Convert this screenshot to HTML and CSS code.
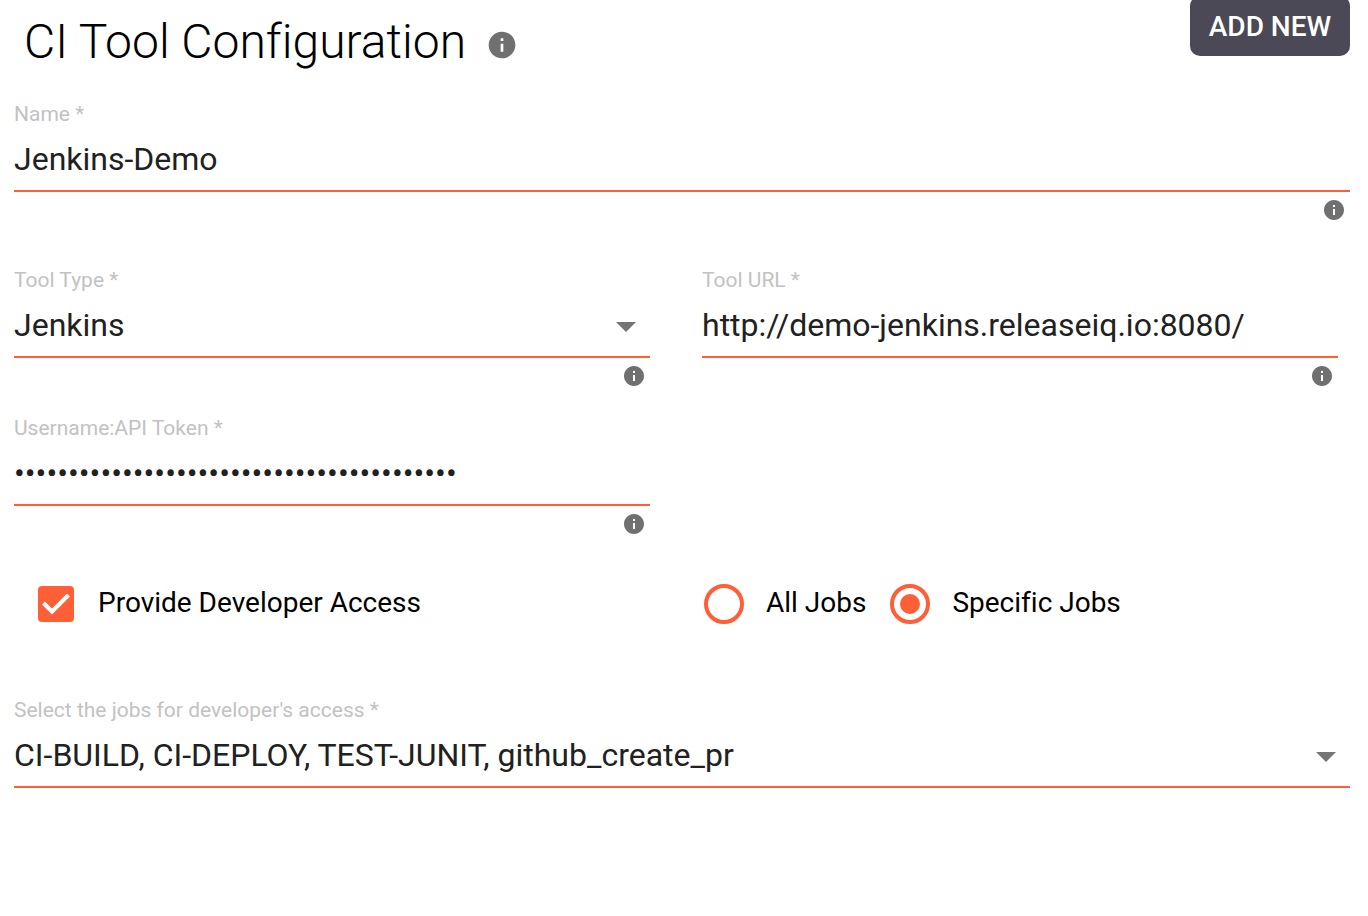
FILE: index.html
```html
<!DOCTYPE html>
<html lang="en">
<head>
<meta charset="utf-8">
<title>CI Tool Configuration</title>
<link rel="stylesheet" href="styles.css">
</head>
<body>
<svg class="defs" aria-hidden="true">
  <symbol id="info" viewBox="0 0 24 24"><path d="M12 2C6.480 2 2 6.480 2 12s4.480 10 10 10 10-4.480 10-10S17.520 2 12 2zm1 15h-2v-6h2v6zm0-8h-2V7h2v2z"/></symbol>
  <symbol id="arrow" viewBox="0 0 24 24"><path d="M7 10l5 5 5-5z"/></symbol>
</svg>
<main class="page">
  <header class="header">
    <h1 class="title">CI Tool Configuration</h1>
    <svg class="title-info"><use href="#info"/></svg>
    <button class="add" type="button">ADD NEW</button>
  </header>
  <form class="form">
    <div class="field field-name">
      <label class="label" for="name">Name *</label>
      <input class="control" id="name" type="text" value="Jenkins-Demo">
      <svg class="info"><use href="#info"/></svg>
    </div>
    <div class="columns">
      <div class="field">
        <label class="label" for="type">Tool Type *</label>
        <div class="select">
          <select class="control" id="type"><option>Jenkins</option></select>
          <svg class="arrow"><use href="#arrow"/></svg>
        </div>
        <svg class="info"><use href="#info"/></svg>
      </div>
      <div class="field">
        <label class="label" for="url">Tool URL *</label>
        <input class="control" id="url" type="text" value="http://demo-jenkins.releaseiq.io:8080/">
        <svg class="info"><use href="#info"/></svg>
      </div>
      <div class="field">
        <label class="label" for="token">Username:API Token *</label>
        <input class="control" id="token" type="password" value="demo:0123456789abcdef0123456789abcdef0123">
        <svg class="info"><use href="#info"/></svg>
      </div>
    </div>
    <div class="columns choices">
      <label class="choice choice-access"><input class="check" type="checkbox" checked><span>Provide Developer Access</span></label>
      <div class="radios">
        <label class="choice"><input class="radio" type="radio" name="jobs"><span>All Jobs</span></label>
        <label class="choice"><input class="radio" type="radio" name="jobs" checked><span>Specific Jobs</span></label>
      </div>
    </div>
    <div class="field">
      <label class="label" for="jobs">Select the jobs for developer's access *</label>
      <div class="select">
        <select class="control" id="jobs"><option>CI-BUILD, CI-DEPLOY, TEST-JUNIT, github_create_pr</option></select>
        <svg class="arrow"><use href="#arrow"/></svg>
      </div>
    </div>
  </form>
</main>
</body>
</html>
```
FILE: styles.css
```css
* { box-sizing: border-box; }
body { margin: 0; background: #fff; color: #000; font-family: Roboto, sans-serif; font-variant-ligatures: none; }
.defs { display: none; }
.page { padding: 0 18px 0 14px; }
.header { display: flex; align-items: flex-start; height: 100px; padding-left: 10px; }
.title { margin: 14px 0 0; font-size: 48px; line-height: 56px; font-weight: 300; }
.title-info { width: 32px; height: 32px; margin: 29px 0 0 20px; fill: #707070; }
.add {
  width: 160px; height: 60px; margin: -4px 0 0 auto; padding: 2px 0 0; border: 0; border-radius: 10px;
  background: #4a4955; color: #fff; font: 500 28px/58px Roboto, sans-serif;
}
.field { display: flex; flex-direction: column; min-height: 148px; }
.field-name { margin-bottom: 18px; }
.label { font-size: 21px; line-height: 28px; color: #c2c2c2; }
.control {
  width: 100%; height: 64px; margin: 0; padding: 0; border: 0; border-bottom: 2px solid #ff5f36; border-radius: 0;
  outline: 0; appearance: none; background: transparent; color: #212121; font: 400 32px/62px Roboto, sans-serif;
}
.info { align-self: flex-end; width: 24px; height: 24px; margin: 6px 4px 0 0; fill: #707070; }
.select { display: grid; align-items: center; }
.select > * { grid-area: 1 / 1; }
.arrow { justify-self: end; width: 48px; height: 48px; fill: #757575; pointer-events: none; }
.columns { display: grid; grid-template-columns: 1fr 1fr; column-gap: 52px; padding-right: 12px; }
.choices { align-items: center; margin: 22px 0 72px; }
.choice { display: flex; align-items: center; gap: 22px; font-size: 28px; line-height: 40px; }
.choice span { margin-top: -3px; }
.choice-access { gap: 24px; padding-left: 24px; }
.radios { display: flex; gap: 24px; padding-left: 2px; }
.check, .radio { appearance: none; flex: none; display: grid; place-items: center; margin: 0; }
.check { width: 36px; height: 36px; border-radius: 4px; background: #ff5f36; }
.check:checked::before {
  content: ""; width: 28px; height: 21px; background: #fff;
  clip-path: polygon(0 11px, 3px 8px, 10px 15px, 25px 0, 28px 3px, 10px 21px);
}
.radio { width: 40px; height: 40px; border: 4px solid #ff5f36; border-radius: 50%; }
.radio:checked::before { content: ""; width: 20px; height: 20px; border-radius: 50%; background: #ff5f36; }
```
